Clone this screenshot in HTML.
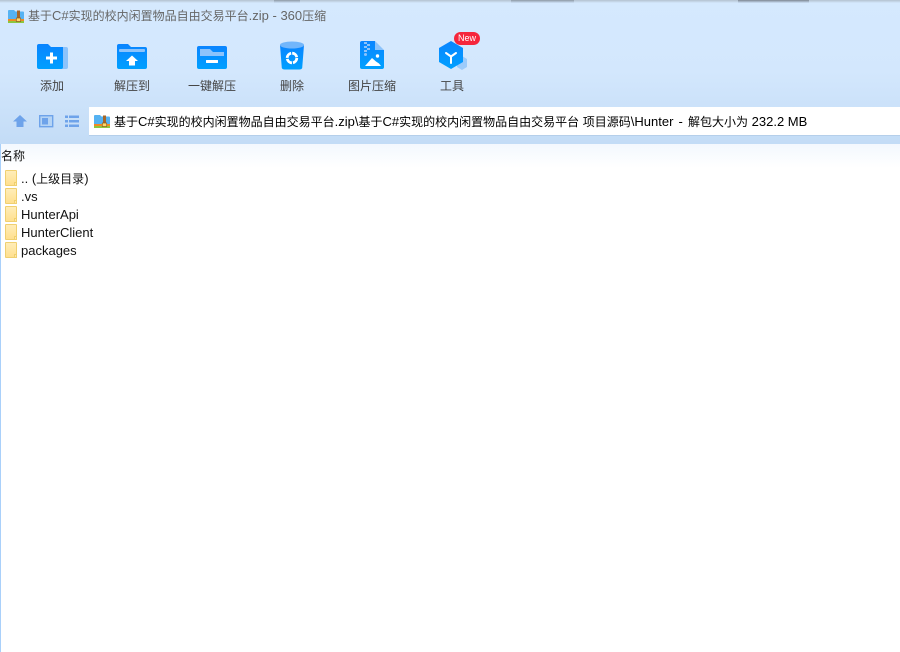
<!DOCTYPE html>
<html><head><meta charset="utf-8">
<style>
html,body{margin:0;padding:0;background:#fff}
#a{position:relative;width:900px;height:652px;overflow:hidden;background:#fff;font-family:"Liberation Sans","Noto Sans CJK SC",sans-serif;font-size:12px;color:#000}
#a div,#a svg{position:absolute}
.t{white-space:nowrap;line-height:18px}
.t span,.n span{font-size:12px}
.l{color:#444;text-align:center;width:80px;top:77px;height:18px;line-height:18px;white-space:nowrap}
.f{left:5px;width:10px;height:14px;background:linear-gradient(#ffedb8,#ffe08f);border:1px solid #f0d070;border-radius:1px}
.f:after{content:"";position:absolute;right:-1px;bottom:-1px;width:3px;height:4px;border:1px solid #f0d070;background:#ffe9a8;box-sizing:border-box}
.n{left:21px;line-height:18px;height:18px;white-space:nowrap;font-size:13px;color:#111}
</style></head><body><div id="a">
<div style="left:0;top:0;width:900px;height:144px;background:linear-gradient(#d5e9fe 0,#d3e7fd 50%,#c3dcf6 100%)"></div>
<div style="left:0;top:0;width:900px;height:3px;background:linear-gradient(#b4c1cf,#d5e9fe)"></div>
<div style="left:274px;top:0;width:26px;height:3px;background:linear-gradient(#8d98a4,#d0e4fa)"></div>
<div style="left:511px;top:0;width:63px;height:3px;background:linear-gradient(#8d98a4,#d0e4fa)"></div>
<div style="left:738px;top:0;width:71px;height:3px;background:linear-gradient(#7d8792,#d0e4fa)"></div>

<svg style="left:8px;top:9px" width="16" height="15" viewBox="0 0 16 15"><path d="M0 2a1 1 0 0 1 1-1h5l1.500 1.500H15a1 1 0 0 1 1 1V10H0z" fill="#55b2f2"/><rect y="10" width="16" height="2" fill="#f08a24"/><rect y="12" width="16" height="2" fill="#8cc63f"/><rect x="9" y="1.500" width="3" height="9" fill="#a5672a"/><rect x="8.300" y="9" width="4.400" height="3.500" fill="#ffd76a" stroke="#8a5a20" stroke-width=".7"/></svg>
<div class="t" style="left:28px;top:7px;font-size:13px;color:#666"><span>基于</span>C#<span>实现的校内闲置物品自由交易平台</span>.zip - 360<span>压缩</span></div>

<svg width="900" height="104" style="left:0;top:28px" viewBox="0 28 900 104">
<defs><linearGradient id="g" x1="0" y1="0" x2="0" y2="1"><stop offset="0" stop-color="#0a84ff"/><stop offset="1" stop-color="#00a0ff"/></linearGradient></defs>
<path d="M60 47h6a2 2 0 0 1 2 2v18a2 2 0 0 1-2 2h-6z" fill="#8cc3fb"/>
<path d="M37 46a2 2 0 0 1 2-2h9l3 3h12v20a2 2 0 0 1-2 2H39a2 2 0 0 1-2-2z" fill="url(#g)"/>
<path d="M46 56.500h4v-4h3v4h4v3h-4v4h-3v-4h-4z" fill="#fff"/>
<path d="M117 46a2 2 0 0 1 2-2h9l3 3h14a2 2 0 0 1 2 2v18a2 2 0 0 1-2 2h-26a2 2 0 0 1-2-2z" fill="url(#g)"/>
<rect x="119" y="49" width="26" height="3" rx="1" fill="#8cc3fb"/>
<path d="M132 55.500l6 5.500h-3v4.500h-6V61h-3z" fill="#fff"/>
<rect x="197" y="46" width="30" height="23" rx="2" fill="url(#g)"/>
<path d="M200 49h10l3 3h11v4h-24z" fill="#8cc3fb"/>
<rect x="206" y="60" width="12" height="3" rx=".5" fill="#fff"/>
<path d="M280 45l1.800 23a3 2 0 0 0 3 1.500h14.400a3 2 0 0 0 3-1.500l1.800-23z" fill="url(#g)"/>
<ellipse cx="292" cy="45" rx="12" ry="3.500" fill="#72b6fb"/>
<circle cx="292" cy="58" r="4.800" fill="none" stroke="#fff" stroke-width="2.800" stroke-dasharray="6.500 1.050"/>
<path d="M360 43a2 2 0 0 1 2-2h13v9h9v17a2 2 0 0 1-2 2h-20a2 2 0 0 1-2-2z" fill="url(#g)"/>
<path d="M375 41l9 9h-9z" fill="#8cc3fb"/>
<path d="M364 42h3v2h-3zM367 44h3v2h-3zM364 46h3v2h-3zM367 48h3v2h-3zM364 50h3v2h-3z" fill="#8cc3fb"/>
<circle cx="365.500" cy="54.500" r="1.500" fill="#8cc3fb"/>
<circle cx="377.500" cy="56" r="1.700" fill="#fff"/>
<path d="M365 66l7-8 4 3.500 3 2 2 2.500z" fill="#fff"/>
<path d="M462 56l5 3v8l-5 3-5-3v-8z" fill="#9ccbfb"/>
<path d="M451 41l12 7v14l-12 7-12-7V48z" fill="url(#g)"/>
<path d="M451 56.500v6.500M451 56.500l-5-3.500M451 56.500l5-3.500" stroke="#fff" stroke-width="2" fill="none" stroke-linecap="round"/>
<path d="M20 115l7 6.500h-3.500v5.500h-7v-5.500H13z" fill="#6ea3ea"/>
<rect x="39.700" y="115.700" width="13" height="11" fill="#b5d4f5" stroke="#6ea3ea" stroke-width="1.400"/>
<rect x="42" y="118" width="6" height="6.500" fill="#6ea3ea"/>
<path d="M65 115.500h3v2.500h-3zM69 115.500h10v2.500H69zM65 120h3v2.500h-3zM69 120h10v2.500H69zM65 124.500h3v2.500h-3zM69 124.500h10v2.500H69z" fill="#6ea3ea"/>
</svg>

<div style="left:454px;top:32px;width:26px;height:13px;border-radius:7px;background:#f5263c;color:#fff;font-size:9px;line-height:13px;text-align:center">New</div>

<div class="l" style="left:12px">添加</div>
<div class="l" style="left:92px">解压到</div>
<div class="l" style="left:172px">一键解压</div>
<div class="l" style="left:252px">删除</div>
<div class="l" style="left:332px">图片压缩</div>
<div class="l" style="left:412px">工具</div>

<div style="left:89px;top:107px;width:811px;height:28px;background:#fff;box-shadow:0 1px 0 #b5cfea"></div>
<svg style="left:94px;top:114px" width="16" height="15" viewBox="0 0 16 15"><path d="M0 2a1 1 0 0 1 1-1h5l1.500 1.500H15a1 1 0 0 1 1 1V10H0z" fill="#55b2f2"/><rect y="10" width="16" height="2" fill="#f08a24"/><rect y="12" width="16" height="2" fill="#8cc63f"/><rect x="9" y="1.500" width="3" height="9" fill="#a5672a"/><rect x="8.300" y="9" width="4.400" height="3.500" fill="#ffd76a" stroke="#8a5a20" stroke-width=".7"/></svg>
<div class="t" style="left:114px;top:113px;font-size:13px;color:#000"><span>基于</span>C#<span>实现的校内闲置物品自由交易平台</span>.zip\<span>基于</span>C#<span>实现的校内闲置物品自由交易平台</span> <span>项目源码</span>\Hunter <b style="font-weight:400;margin:0 1.500px">-</b> <span>解包大小为</span> 232.2 MB</div>

<div style="left:0;top:144px;width:900px;height:24px;background:linear-gradient(#f3f8fe,#fff)"></div>
<div style="left:0;top:144px;width:1px;height:508px;background:#a9d0fa"></div>
<div class="t" style="left:1px;top:147px;color:#111">名称</div>

<div class="f" style="top:170px"></div><div class="n" style="top:170px">.. (<span>上级目录</span>)</div>
<div class="f" style="top:188px"></div><div class="n" style="top:188px">.vs</div>
<div class="f" style="top:206px"></div><div class="n" style="top:206px">HunterApi</div>
<div class="f" style="top:224px"></div><div class="n" style="top:224px">HunterClient</div>
<div class="f" style="top:242px"></div><div class="n" style="top:242px">packages</div>
</div></body></html>
